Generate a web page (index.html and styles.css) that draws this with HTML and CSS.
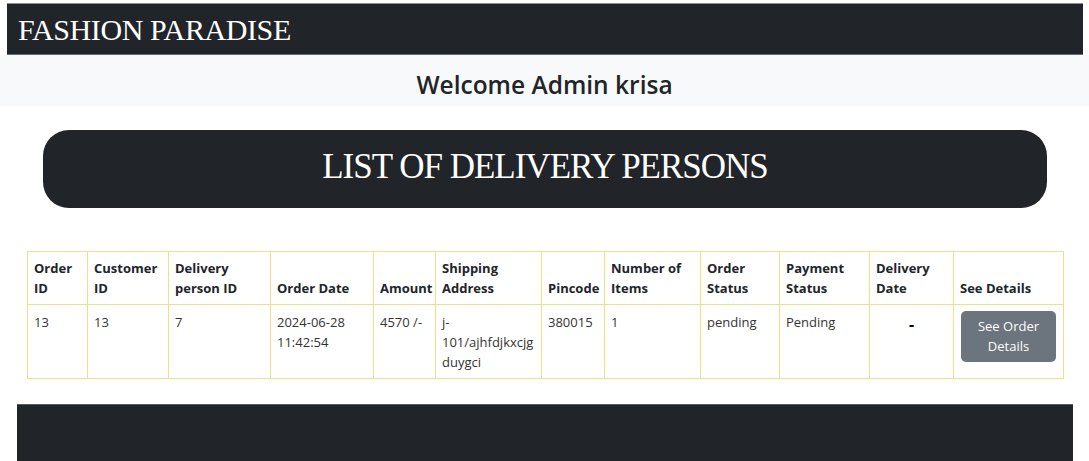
FILE: index.html
```html
<!DOCTYPE html>
<html>
<head>
<meta charset="utf-8">
<link rel="stylesheet" href="styles.css">
</head>
<body>
<header class="topbar"><span class="brand">FASHION PARADISE</span></header>
<section class="welcome"><h2>Welcome Admin krisa</h2></section>
<div class="title-pill"><h1>LIST OF DELIVERY PERSONS</h1></div>
<table class="orders">
  <colgroup>
    <col style="width:60px"><col style="width:81px"><col style="width:102px"><col style="width:103px"><col style="width:62px"><col style="width:106px"><col style="width:63px"><col style="width:96px"><col style="width:79px"><col style="width:90px"><col style="width:84px"><col style="width:110px">
  </colgroup>
  <thead>
    <tr>
      <th>Order ID</th><th>Customer ID</th><th>Delivery person ID</th><th>Order Date</th><th>Amount</th><th>Shipping Address</th><th>Pincode</th><th>Number of Items</th><th>Order Status</th><th>Payment Status</th><th>Delivery Date</th><th>See Details</th>
    </tr>
  </thead>
  <tbody>
    <tr>
      <td>13</td><td>13</td><td>7</td><td>2024-06-28 11:42:54</td><td>4570 /-</td><td>j-101/ajhfdjkxcjg duygci</td><td>380015</td><td>1</td><td>pending</td><td>Pending</td><td class="dash">-</td><td class="action"><button class="btn">See Order Details</button></td>
    </tr>
  </tbody>
</table>
<footer class="footer"></footer>
</body>
</html>
```
FILE: styles.css
```css
* { box-sizing: border-box; }
html, body { margin: 0; padding: 0; background: #fff; }
body { font-family: "Open Sans", "Noto Sans", sans-serif; color: #212529; }
.topbar {
  margin: 3px 6px 0 7px;
  height: 52px;
  background: #212529;
  border-top: 1px solid #8a8c8f;
  border-bottom: 1px solid #6a6d70;
  display: flex;
  align-items: center;
  padding-left: 11px;
}
.brand {
  font-family: "Liberation Serif", "DejaVu Serif", serif;
  color: #fff;
  font-size: 30px;
  letter-spacing: -0.4px;
  line-height: 1;
  margin-top: 2px;
}
.welcome {
  background: #f8f9fa;
  height: 51px;
  display: flex;
  align-items: center;
  justify-content: center;
}
.welcome h2 {
  margin: 8px 0 0;
  font-size: 24.5px;
  font-weight: 600;
  color: #212529;
}
.title-pill {
  margin: 24px 42px 0 43px;
  height: 78px;
  background: #212529;
  border-radius: 26px;
  display: flex;
  align-items: center;
  justify-content: center;
}
.title-pill h1 {
  margin: 0 0 4px;
  font-family: "Liberation Serif", "DejaVu Serif", serif;
  font-weight: 400;
  font-size: 35px;
  letter-spacing: -1px;
  color: #fff;
}
.orders {
  margin: 43px 0 0 27px;
  width: 1036px;
  border-collapse: collapse;
  table-layout: fixed;
  font-size: 13px;
  line-height: 20px;
}
.orders th, .orders td {
  border: 1px solid #f3dc8a;
  padding: 7px 6px;
  text-align: left;
}
.orders th {
  vertical-align: bottom;
  font-weight: 700;
  padding-top: 6px;
  padding-bottom: 6px;
}
.orders td {
  vertical-align: top;
  color: #333;
  padding-top: 7px;
  padding-bottom: 6px;
}
.orders td.dash {
  text-align: center;
  font-weight: 700;
  font-size: 16px;
  color: #000;
  padding-top: 9px;
}
.orders td.action { padding-top: 6px; }
.btn {
  display: block;
  width: 95px;
  margin: 0 0 0 1px;
  padding: 5px 8px 6px;
  background: #6c757d;
  color: #fff;
  border: none;
  border-radius: 5px;
  font-family: inherit;
  font-size: 13px;
  line-height: 20px;
}
.footer {
  margin: 25px 16px 0 17px;
  height: 60px;
  background: #212529;
  border-top: 1px solid #555a5f;
}
```
